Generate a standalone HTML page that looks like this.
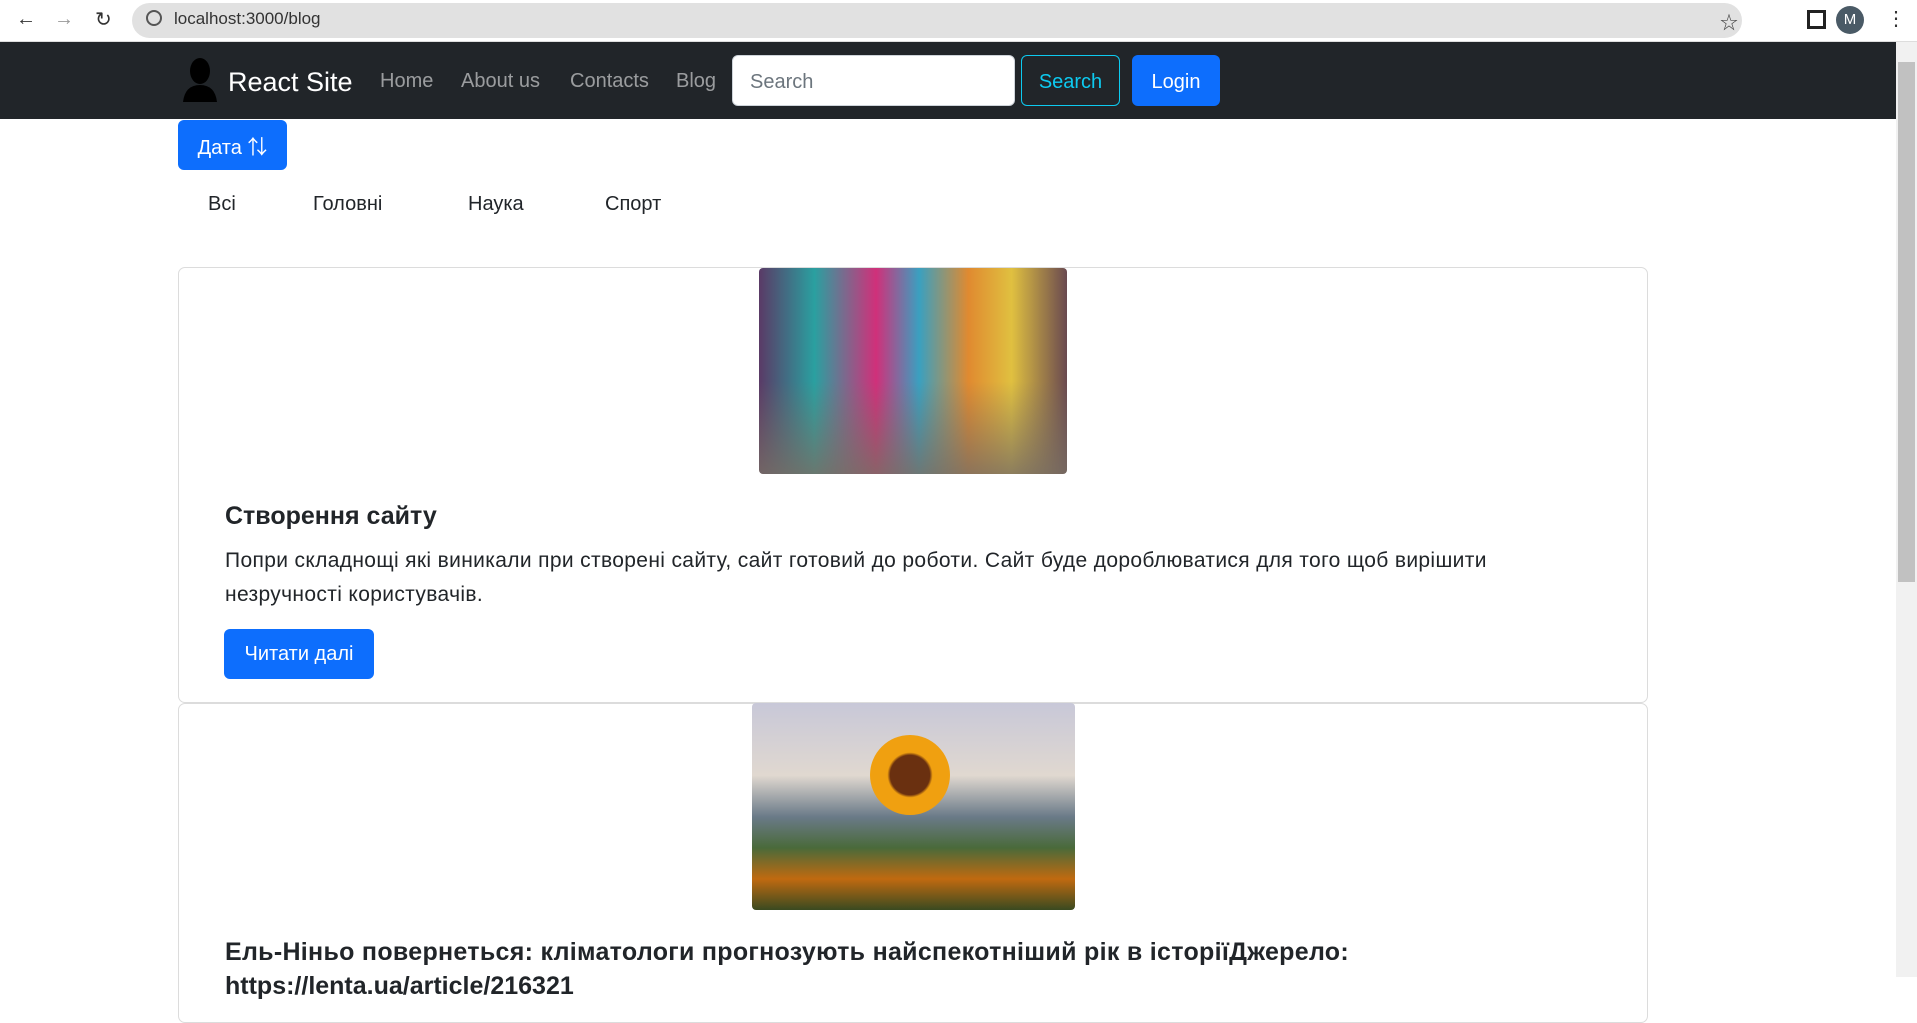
<!DOCTYPE html>
<html><head><meta charset="utf-8"><style>
*{box-sizing:border-box;margin:0;padding:0}
body{width:1917px;height:977px;overflow:hidden;font-family:"Liberation Sans","Noto Sans CJK SC",sans-serif;background:#fff;position:relative;color:#212529}
.abs{position:absolute}
.chrome{left:0;top:0;width:1917px;height:42px;background:#fff;border-bottom:1px solid #ddd}
.url{left:132px;top:3px;width:1610px;height:35px;border-radius:18px;background:#e1e1e1}
.nav{left:0;top:42px;width:1896px;height:77px;background:#212529}
.sb{left:1896px;top:42px;width:21px;height:935px;background:#f1f1f1}
.thumb{left:1898px;top:62px;width:17px;height:520px;background:#c1c1c1}
.link{color:rgba(255,255,255,.55);font-size:20px;top:70px}
.btn{border-radius:6px;color:#fff;font-size:20px;display:flex;align-items:center;justify-content:center}
.card{left:178px;width:1470px;border:1px solid #dcdcdc;border-radius:7px;background:#fff}
.tab{top:193px;font-size:20px;color:#212529}
</style></head><body>
<div class="abs chrome"></div>
<div class="abs url"></div>
<div class="abs" style="left:16px;top:8px;font-size:20px;color:#333">&#8592;</div>
<div class="abs" style="left:54px;top:8px;font-size:20px;color:#999">&#8594;</div>
<div class="abs" style="left:95px;top:7px;font-size:20px;color:#333">&#8635;</div>
<div class="abs" style="left:146px;top:10px;width:16px;height:16px;border:2px solid #555;border-radius:50%"></div>
<div class="abs" style="left:174px;top:9px;font-size:17px;color:#333">localhost:3000/blog</div>
<div class="abs" style="left:1720px;top:9px;font-size:18px;color:#444">&#9734;</div>
<div class="abs" style="left:1807px;top:10px;width:19px;height:19px;border:3px solid #222"></div>
<div class="abs" style="left:1836px;top:6px;width:28px;height:28px;border-radius:50%;background:#4a5a66;color:#fff;font-size:15px;text-align:center;line-height:28px">M</div>
<div class="abs" style="left:1886px;top:6px;font-size:20px;color:#333">&#8942;</div>

<div class="abs nav"></div>
<svg class="abs" style="left:181px;top:57px" width="38" height="45" viewBox="0 0 38 45"><ellipse cx="19" cy="14" rx="10" ry="13" fill="#000"/><path d="M2 45 Q4 28 19 28 Q34 28 36 45Z" fill="#000"/></svg>
<div class="abs" style="left:228px;top:67px;font-size:27px;color:#fff">React Site</div>
<div class="abs link" style="left:380px">Home</div>
<div class="abs link" style="left:461px">About us</div>
<div class="abs link" style="left:570px">Contacts</div>
<div class="abs link" style="left:676px">Blog</div>
<div class="abs" style="left:732px;top:55px;width:283px;height:51px;background:#fff;border-radius:6px;border:1px solid #ced4da;font-size:20px;color:#6c757d;padding:15px 17px">Search</div>
<div class="abs btn" style="left:1021px;top:55px;width:99px;height:51px;border:1px solid #0dcaf0;color:#0dcaf0;padding-top:3px">Search</div>
<div class="abs btn" style="left:1132px;top:55px;width:88px;height:51px;background:#0d6efd;padding-top:3px">Login</div>
<div class="abs sb"></div><div class="abs thumb"></div>

<div class="abs btn" style="left:178px;top:120px;width:109px;height:50px;background:#0d6efd">Дата &#8645;</div>
<div class="abs tab" style="left:208px">Всі</div>
<div class="abs tab" style="left:313px">Головні</div>
<div class="abs tab" style="left:468px">Наука</div>
<div class="abs tab" style="left:605px">Спорт</div>

<div class="abs card" style="top:267px;height:436px"></div>
<div class="abs" style="left:759px;top:268px;width:308px;height:206px;border-radius:4px;background:linear-gradient(180deg,rgba(0,0,0,0) 55%,rgba(120,110,100,.8) 100%),linear-gradient(90deg,#5a3a66,#2aa0a0 18%,#d0307a 38%,#3aa0c0 52%,#e08a30 68%,#e0c040 82%,#6a4a50)"></div>
<div class="abs" style="left:225px;top:502px;font-size:25px;font-weight:bold;color:#212529">Створення сайту</div>
<div class="abs" style="left:225px;top:544px;width:1420px;font-size:21px;letter-spacing:0.35px;line-height:34px;color:#212529">Попри складнощі які виникали при створені сайту, сайт готовий до роботи. Сайт буде дороблюватися для того щоб вирішити<br>незручності користувачів.</div>
<div class="abs btn" style="left:224px;top:629px;width:150px;height:50px;background:#0d6efd">Читати далі</div>

<div class="abs card" style="top:703px;height:320px"></div>
<div class="abs" style="left:752px;top:703px;width:323px;height:207px;border-radius:4px;background:linear-gradient(180deg,#c8c8d8 0%,#e0d8d0 35%,#6a7a88 55%,#4a6a3a 70%,#c06a10 85%,#3a4a20 100%)"></div>
<div class="abs" style="left:870px;top:735px;width:80px;height:80px;border-radius:50%;background:radial-gradient(#6a3010 35%,#f0a010 40%)"></div>
<div class="abs" style="left:225px;top:938px;font-size:25px;font-weight:bold;letter-spacing:0.3px;color:#212529;white-space:nowrap">Ель-Ніньо повернеться: кліматологи прогнозують найспекотніший рік в історіїДжерело:</div>
<div class="abs" style="left:225px;top:972px;font-size:25px;font-weight:bold;color:#212529">https://lenta.ua/article/216321</div>
</body></html>
